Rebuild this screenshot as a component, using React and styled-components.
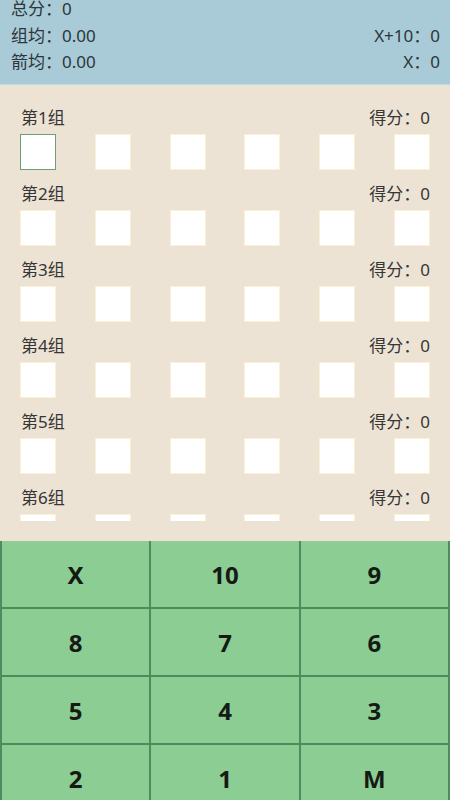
import React from "react";
import styled, { createGlobalStyle } from "styled-components";

const GlobalStyle = createGlobalStyle`
    html, body {
        margin: 0;
        padding: 0;
        overflow: hidden;
    }
    body {
        font-family: "Noto Sans", "Noto Sans CJK SC", sans-serif;
    }
`;

const groups = [1, 2, 3, 4, 5, 6];
const keys = ["X", "10", "9", "8", "7", "6", "5", "4", "3", "2", "1", "M"];

const App = () => {
    return (
        <Page>
            <GlobalStyle />
            <Summary>
                <StatRow>
                    <span>总分：0</span>
                </StatRow>
                <StatRow>
                    <span>组均：0.00</span>
                    <span>X+10：0</span>
                </StatRow>
                <StatRow>
                    <span>箭均：0.00</span>
                    <span>X：0</span>
                </StatRow>
            </Summary>
            <Board>
                <GroupList>
                    {groups.map((g) => (
                        <Group key={g}>
                            <GroupHead>
                                <span>第{g}组</span>
                                <span>得分：0</span>
                            </GroupHead>
                            <Arrows>
                                {[0, 1, 2, 3, 4, 5].map((i) => (
                                    <ArrowBox key={i} $active={g === 1 && i === 0} />
                                ))}
                            </Arrows>
                        </Group>
                    ))}
                </GroupList>
            </Board>
            <Keypad>
                {keys.map((k) => (
                    <Key key={k}>{k}</Key>
                ))}
            </Keypad>
        </Page>
    );
};

const Page = styled.div`
    display: flex;
    flex-direction: column;
    width: 450px;
    height: 100vh;
    overflow: hidden;
`;

const Summary = styled.div`
    display: grid;
    row-gap: 8.5px;
    height: 85px;
    box-sizing: border-box;
    padding: 0 10px 0 11px;
    background-color: #a9cbd7;
    border-bottom: 1px solid #c4d8de;
    color: #2c363a;
    font-size: 17px;
    flex-shrink: 0;
    align-content: start;
`;

const StatRow = styled.div`
    display: flex;
    justify-content: space-between;
    height: 18px;
    line-height: 18px;
`;

const Board = styled.div`
    height: 456px;
    flex-shrink: 0;
    box-sizing: border-box;
    padding: 0 20px 20px;
    background-color: #ede3d5;
`;

const GroupList = styled.div`
    height: 100%;
    overflow: hidden;
    padding-top: 23px;
    box-sizing: border-box;
`;

const Group = styled.div`
    display: flex;
    flex-direction: column;
    gap: 6px;
    padding-bottom: 14px;
`;

const GroupHead = styled.div`
    display: flex;
    justify-content: space-between;
    height: 20px;
    line-height: 20px;
    padding-left: 1px;
    font-size: 17px;
    color: #363636;
`;

const Arrows = styled.div`
    display: flex;
    justify-content: space-between;
`;

const ArrowBox = styled.div`
    width: 36px;
    height: 36px;
    box-sizing: border-box;
    background-color: #ffffff;
    border: 1px solid ${({ $active }) => ($active ? "#6f9f7a" : "#fbf0d2")};
`;

const Keypad = styled.div`
    display: grid;
    grid-template-columns: repeat(3, 1fr);
    grid-auto-rows: 66px;
    gap: 2px;
    padding: 0 2px;
    background-color: #4f8b5c;
    flex-shrink: 0;
`;

const Key = styled.div`
    display: flex;
    align-items: center;
    justify-content: center;
    background-color: #8ccd93;
    color: #151a15;
    font-size: 24px;
    font-weight: 700;
    cursor: pointer;
`;

export default App;
